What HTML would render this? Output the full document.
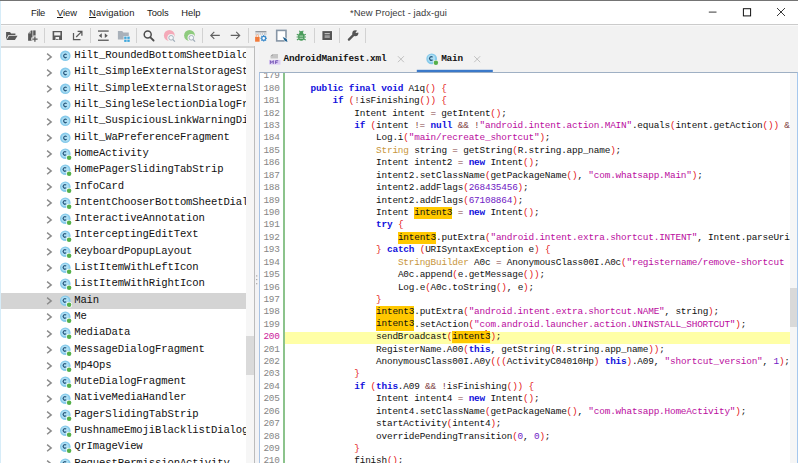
<!DOCTYPE html>
<html><head><meta charset="utf-8"><title>jadx-gui</title>
<style>
html,body{margin:0;padding:0;}
body{width:798px;height:463px;overflow:hidden;background:#fff;position:relative;font-family:"Liberation Sans",sans-serif;}
.abs{position:absolute;}
#titlebar{left:0;top:0;width:798px;height:24px;background:#fff;border-top:1px solid #747474;box-sizing:border-box;}
.menu{position:absolute;top:6.5px;font-size:9.4px;color:#1a1a1a;white-space:nowrap;line-height:12px;}
.menu u{text-decoration:underline;text-underline-offset:1px;}
#title{position:absolute;top:6.5px;left:350px;font-size:9.4px;letter-spacing:0.07px;color:#3a3a3a;white-space:nowrap;line-height:12px;}
#toolbar{left:0;top:24px;width:798px;height:23px;background:#f2f2f2;border-top:1px solid #cbcbcb;box-sizing:border-box;box-shadow:inset 0 1px 0 #f9f9f9;}
.sep{position:absolute;top:28.2px;width:1px;height:14.6px;background:#d2d2d2;}
#tree{left:1px;top:47.5px;width:245.2px;height:416px;background:#fff;overflow:hidden;}
.row{position:absolute;white-space:pre;font-family:"Liberation Mono",monospace;color:#111;}
.row .tx{position:absolute;top:0;}
.row.sel{background:#d4d4d4;}
.chev{position:absolute;}
.ico{position:absolute;}
#tsb{left:246.2px;top:47.5px;width:7.7px;height:416px;background:#f6f6f6;}
#tsbthumb{left:246.2px;top:336px;width:7.7px;height:38.7px;background:#dadada;}
#split{left:253.9px;top:46.3px;width:5.1px;height:417px;background:#f3f3f5;border-left:0.9px solid #bcbcbc;box-sizing:border-box;}
#tabs{left:259px;top:47px;width:539px;height:25px;background:#f2f2f2;}
.tabtx{position:absolute;font-family:"Liberation Mono",monospace;font-weight:bold;color:#111;white-space:nowrap;}
#codewrap{left:259px;top:72px;width:539px;height:391px;background:#fff;border-left:1px solid #a9c3e3;border-top:1px solid #9fb0c4;border-right:1.2px solid #a6c8ee;box-sizing:border-box;overflow:hidden;}
.ln{position:absolute;font-family:"Liberation Mono",monospace;color:#8a8a8a;white-space:pre;}
.cl{position:absolute;font-family:"Liberation Mono",monospace;color:#111;white-space:pre;}
.k{color:#1010dc;font-weight:bold;}
.s{color:#ba0c9e;}
.n{color:#7020c4;}
.p{color:#e42020;}
.t{color:#c8963c;}
.o{color:#804040;}
.h{background:#ffc800;padding:0.3px 0 1.2px 0;}
#curline{left:285px;width:504.7px;background:#ffffa6;}
.caret{display:inline-block;width:0;height:10px;vertical-align:-2px;box-shadow:1.1px 0 0 0.8px #e81010;}
#vsb{left:789.7px;top:73px;width:7px;height:390px;background:#f6f6f6;}
#vsbthumb{left:789.7px;top:288px;width:7px;height:38.6px;background:#d9d9d9;}
#greenline{left:283.2px;top:73px;width:1.7px;height:390px;background:#8cc38c;}
</style></head><body>

<div id="titlebar" class="abs"></div>
<div class="menu" style="left:31px;letter-spacing:-0.3px">File</div>
<div class="menu" style="left:57px;letter-spacing:-0.05px"><u>V</u>iew</div>
<div class="menu" style="left:89px;letter-spacing:0.12px"><u>N</u>avigation</div>
<div class="menu" style="left:147.1px;letter-spacing:-0.08px">Tools</div>
<div class="menu" style="left:181.2px;letter-spacing:0px">Help</div>
<div id="title">*New Project - jadx-gui</div>
<svg class="abs" style="left:699.3px;top:0" width="98" height="24" viewBox="0 0 98 24">
<line x1="9.8" y1="12.1" x2="17.5" y2="12.1" stroke="#222" stroke-width="0.9"/>
<rect x="44.4" y="8.7" width="7.2" height="7.2" fill="none" stroke="#111" stroke-width="1"/>
<path d="M78 8 L86 16 M86 8 L78 16" stroke="#222" stroke-width="0.9" fill="none"/>
</svg>
<div id="toolbar" class="abs"></div>
<div class="sep" style="left:44.2px"></div>
<div class="sep" style="left:90.2px"></div>
<div class="sep" style="left:136.2px"></div>
<div class="sep" style="left:202px"></div>
<div class="sep" style="left:248px"></div>
<div class="sep" style="left:314px"></div>
<div class="sep" style="left:339.2px"></div>
<div class="sep" style="left:365px"></div>
<svg class="abs" style="left:0;top:24px" width="400" height="24" viewBox="0 24 400 24">
<path d="M6.1 32 h3.9 l1.1 1.4 h4.3 v1.6 h-6.9 l-2.4 4.6 z" fill="#595959"/>
<path d="M9.1 35.7 h8.4 l-2.6 4.3 h-8.4 z" fill="#595959"/>
<path d="M28.1 33.6 l3 -3.2 h1.4 v10.4 h-4.4 z" fill="#595959"/>
<path d="M28.1 33.4 h2.9 v-2.9 z" fill="#a9a9a9"/>
<rect x="33.2" y="30.4" width="2.4" height="10.4" fill="#595959"/>
<path d="M33.3 35.6 h3.2 v1.9 h2 v3.1 h-2 v2 h-3.2 v-2 h-2 v-3.1 h2 z" fill="#f2f2f2"/>
<path d="M34.9 36.5 v5.2 M32.3 39.05 h5.3" stroke="#595959" stroke-width="1.25" fill="none"/>
<path d="M52.6 30.9 h9.4 v9.1 h-2.9 v-2.9 h-3.6 v2.9 h-2.9 z M54.2 32.3 v3.3 h6.2 v-3.3 z" fill="#595959" fill-rule="evenodd"/>
<rect x="56" y="39" width="2.6" height="0.8" fill="#595959"/>
<path d="M73.5 33 v6.5 h7" stroke="#595959" stroke-width="1.25" fill="none"/>
<path d="M76.2 37 L81.6 31.6 M77.6 31.45 h4.3 v4.3" stroke="#595959" stroke-width="1.25" fill="none"/>
<rect x="98" y="30.4" width="10.7" height="1.3" fill="#595959"/><rect x="98" y="39.6" width="10.7" height="1.3" fill="#595959"/>
<path d="M98.8 35.65 l3 -2.3 v4.6 z M107.8 35.65 l-3 -2.3 v4.6 z" fill="#595959"/>
<path d="M117.9 31.1 h4.3 l1.2 1.5 h5.4 v7 h-10.9 z" fill="#a9b1ba"/>
<rect x="123.6" y="36" width="6.6" height="6.4" fill="#f2f2f2"/>
<g fill="#3fa7dc"><rect x="124.2" y="36.6" width="2.4" height="2.3"/><rect x="127.3" y="36.6" width="2.4" height="2.3"/><rect x="124.2" y="39.6" width="2.4" height="2.3"/><rect x="127.3" y="39.6" width="2.4" height="2.3"/></g>
<circle cx="147.7" cy="34.5" r="3.5" fill="none" stroke="#4d4d4d" stroke-width="1.5"/><path d="M150.4 37.3 L153.6 40.5" stroke="#4d4d4d" stroke-width="1.8" stroke-linecap="round"/>
<circle cx="169.3" cy="35.4" r="5.4" fill="#f4a9b8"/>
<circle cx="171.10000000000002" cy="37.8" r="3.8" fill="#f2f2f2"/>
<path d="M172.70000000000002 39.4 L175.20000000000002 42" stroke="#f2f2f2" stroke-width="2.6"/>
<circle cx="171.10000000000002" cy="37.8" r="2.3" fill="#f4f7f9" stroke="#9eabb8" stroke-width="0.9"/>
<path d="M172.8 39.5 L174.90000000000003 41.7" stroke="#9eabb8" stroke-width="1.15"/>
<circle cx="189.5" cy="35.4" r="5.4" fill="#8ecb7e"/>
<circle cx="191.3" cy="37.8" r="3.8" fill="#f2f2f2"/>
<path d="M192.9 39.4 L195.4 42" stroke="#f2f2f2" stroke-width="2.6"/>
<circle cx="191.3" cy="37.8" r="2.3" fill="#f4f7f9" stroke="#9eabb8" stroke-width="0.9"/>
<path d="M193.0 39.5 L195.10000000000002 41.7" stroke="#9eabb8" stroke-width="1.15"/>
<path d="M219.8 35.4 H210.9 M214.3 31.9 L210.8 35.4 L214.3 38.9" stroke="#606060" stroke-width="1.15" fill="none"/>
<path d="M230.7 35.4 H239.6 M236.2 31.9 L239.7 35.4 L236.2 38.9" stroke="#606060" stroke-width="1.15" fill="none"/>
<rect x="255.4" y="31.1" width="11" height="1.3" fill="#8a8f96"/>
<path d="M256 32.4 v2.6 M258.1 32.4 v2.6 M260.2 32.4 v2.6 M262.3 32.4 v2.6 M264.4 32.4 v2.6 M265.9 32.4 v2.6" stroke="#c3c7cc" stroke-width="1.1"/>
<rect x="255.1" y="36.9" width="4.5" height="4.8" fill="#f27a3a"/><path d="M256.2 37 v-1.2 a1.15 1.15 0 0 1 2.3 0 v1.2" stroke="#f6a274" stroke-width="0.8" fill="none"/>
<circle cx="263.7" cy="38.3" r="1.95" fill="#fff" stroke="#3a8acb" stroke-width="1.25"/>
<g stroke="#3a8acb" stroke-width="1.1"><path d="M263.7 35 v1 M263.7 40.6 v1 M260.4 38.3 h1 M266 38.3 h1 M261.4 36 l0.7 0.7 M265.3 39.9 l0.7 0.7 M266 36 l-0.7 0.7 M262.1 39.9 l-0.7 0.7"/></g>
<rect x="276.7" y="30.4" width="9.3" height="10.5" fill="#fff" stroke="#8796a6" stroke-width="1.6"/>
<path d="M281.9 36.3 l5.4 2 l0.8 4 l-3.4 -0.6 z" fill="#f2f2f2"/>
<path d="M282.8 37 l3.8 1.7 l0.9 3.2 l-2.8 -1.2 z" fill="#1d5f8f"/>
<ellipse cx="301.3" cy="36.8" rx="3.2" ry="4" fill="#4b9c5c"/>
<path d="M299.3 30.7 l1.3 1.8 M303.3 30.7 l-1.3 1.8 M296.8 34.2 l2 1 M305.8 34.2 l-2 1 M296.6 37 h2 M306 37 h-2 M296.9 40 l2 -1.2 M305.7 40 l-2 -1.2" stroke="#4b9c5c" stroke-width="1.1" fill="none"/>
<circle cx="301.3" cy="33" r="1.9" fill="#4b9c5c"/>
<path d="M299.5 36.1 h3.6 M299.5 38.3 h3.6" stroke="#b4d9bc" stroke-width="1"/>
<rect x="321.9" y="30.6" width="10.6" height="9.9" fill="#f8f8f8"/>
<rect x="322.4" y="31.1" width="9.6" height="8.9" fill="#565656"/>
<rect x="324.6" y="33.1" width="5.2" height="1.1" fill="#c9c9c9"/><rect x="324.6" y="35.2" width="5.2" height="2.8" fill="#9c9c9c"/>
<path d="M348.9 39.6 L354.6 33.9" stroke="#555" stroke-width="2.3" stroke-linecap="round"/>
<circle cx="355.3" cy="33.2" r="3" fill="#555"/>
<path d="M355.6 32.9 L358.2 29.2 L360 31.8 Z" fill="#f2f2f2"/>
<path d="M355.5 33 l1.6 -2.3 l1.1 1.5 z" fill="#f2f2f2"/>
</svg>
<div class="abs" style="left:1px;top:46px;width:253.8px;height:1.5px;background:#d4d4d4"></div>
<div id="tree" class="abs">
<svg class="chev" style="left:44.8px;top:5.00px" width="7" height="8" viewBox="0 0 7 8"><path d="M1.1 0.6 L5.2 3.9 L1.1 7.2" fill="none" stroke="#8a8a8a" stroke-width="1.4"/></svg>
<svg class="ico" style="left:57.9px;top:2.70px" width="14" height="14" viewBox="0 0 14 14"><circle cx="6.3" cy="5.8" r="5.3" fill="#86caeb"/><circle cx="6.5" cy="5.9" r="3.7" fill="#aedff4"/><path d="M7.65 4.65 A1.75 1.75 0 1 0 7.65 7.15" fill="none" stroke="#2a5a7e" stroke-width="1.25"/></svg>
<div class="row" style="left:73.20px;top:-0.37px;font-size:10.6px;line-height:16.30px;letter-spacing:-0.140px">Hilt_RoundedBottomSheetDialogFragment</div>
<svg class="chev" style="left:44.8px;top:21.30px" width="7" height="8" viewBox="0 0 7 8"><path d="M1.1 0.6 L5.2 3.9 L1.1 7.2" fill="none" stroke="#8a8a8a" stroke-width="1.4"/></svg>
<svg class="ico" style="left:57.9px;top:19.00px" width="14" height="14" viewBox="0 0 14 14"><circle cx="6.3" cy="5.8" r="5.3" fill="#86caeb"/><circle cx="6.5" cy="5.9" r="3.7" fill="#aedff4"/><path d="M7.65 4.65 A1.75 1.75 0 1 0 7.65 7.15" fill="none" stroke="#2a5a7e" stroke-width="1.25"/></svg>
<div class="row" style="left:73.20px;top:15.93px;font-size:10.6px;line-height:16.30px;letter-spacing:-0.140px">Hilt_SimpleExternalStorageStateCallback</div>
<svg class="chev" style="left:44.8px;top:37.60px" width="7" height="8" viewBox="0 0 7 8"><path d="M1.1 0.6 L5.2 3.9 L1.1 7.2" fill="none" stroke="#8a8a8a" stroke-width="1.4"/></svg>
<svg class="ico" style="left:57.9px;top:35.30px" width="14" height="14" viewBox="0 0 14 14"><circle cx="6.3" cy="5.8" r="5.3" fill="#86caeb"/><circle cx="6.5" cy="5.9" r="3.7" fill="#aedff4"/><path d="M7.65 4.65 A1.75 1.75 0 1 0 7.65 7.15" fill="none" stroke="#2a5a7e" stroke-width="1.25"/></svg>
<div class="row" style="left:73.20px;top:32.23px;font-size:10.6px;line-height:16.30px;letter-spacing:-0.140px">Hilt_SimpleExternalStorageStateDialog</div>
<svg class="chev" style="left:44.8px;top:53.90px" width="7" height="8" viewBox="0 0 7 8"><path d="M1.1 0.6 L5.2 3.9 L1.1 7.2" fill="none" stroke="#8a8a8a" stroke-width="1.4"/></svg>
<svg class="ico" style="left:57.9px;top:51.60px" width="14" height="14" viewBox="0 0 14 14"><circle cx="6.3" cy="5.8" r="5.3" fill="#86caeb"/><circle cx="6.5" cy="5.9" r="3.7" fill="#aedff4"/><path d="M7.65 4.65 A1.75 1.75 0 1 0 7.65 7.15" fill="none" stroke="#2a5a7e" stroke-width="1.25"/></svg>
<div class="row" style="left:73.20px;top:48.53px;font-size:10.6px;line-height:16.30px;letter-spacing:-0.140px">Hilt_SingleSelectionDialogFragment</div>
<svg class="chev" style="left:44.8px;top:70.20px" width="7" height="8" viewBox="0 0 7 8"><path d="M1.1 0.6 L5.2 3.9 L1.1 7.2" fill="none" stroke="#8a8a8a" stroke-width="1.4"/></svg>
<svg class="ico" style="left:57.9px;top:67.90px" width="14" height="14" viewBox="0 0 14 14"><circle cx="6.3" cy="5.8" r="5.3" fill="#86caeb"/><circle cx="6.5" cy="5.9" r="3.7" fill="#aedff4"/><path d="M7.65 4.65 A1.75 1.75 0 1 0 7.65 7.15" fill="none" stroke="#2a5a7e" stroke-width="1.25"/></svg>
<div class="row" style="left:73.20px;top:64.83px;font-size:10.6px;line-height:16.30px;letter-spacing:-0.140px">Hilt_SuspiciousLinkWarningDialogFragment</div>
<svg class="chev" style="left:44.8px;top:86.50px" width="7" height="8" viewBox="0 0 7 8"><path d="M1.1 0.6 L5.2 3.9 L1.1 7.2" fill="none" stroke="#8a8a8a" stroke-width="1.4"/></svg>
<svg class="ico" style="left:57.9px;top:84.20px" width="14" height="14" viewBox="0 0 14 14"><circle cx="6.3" cy="5.8" r="5.3" fill="#86caeb"/><circle cx="6.5" cy="5.9" r="3.7" fill="#aedff4"/><path d="M7.65 4.65 A1.75 1.75 0 1 0 7.65 7.15" fill="none" stroke="#2a5a7e" stroke-width="1.25"/></svg>
<div class="row" style="left:73.20px;top:81.13px;font-size:10.6px;line-height:16.30px;letter-spacing:-0.140px">Hilt_WaPreferenceFragment</div>
<svg class="chev" style="left:44.8px;top:102.80px" width="7" height="8" viewBox="0 0 7 8"><path d="M1.1 0.6 L5.2 3.9 L1.1 7.2" fill="none" stroke="#8a8a8a" stroke-width="1.4"/></svg>
<svg class="ico" style="left:57.9px;top:100.50px" width="14" height="14" viewBox="0 0 14 14"><circle cx="6.3" cy="5.8" r="5.3" fill="#86caeb"/><circle cx="6.0" cy="5.4" r="3.7" fill="#aedff4"/><path d="M7.15 4.15 A1.75 1.75 0 1 0 7.15 6.65" fill="none" stroke="#2a5a7e" stroke-width="1.25"/><circle cx="10.1" cy="9.7" r="2.9" fill="#fff"/><circle cx="10.1" cy="9.7" r="2.25" fill="#55b04a"/></svg>
<div class="row" style="left:73.20px;top:97.43px;font-size:10.6px;line-height:16.30px;letter-spacing:-0.140px">HomeActivity</div>
<svg class="chev" style="left:44.8px;top:119.10px" width="7" height="8" viewBox="0 0 7 8"><path d="M1.1 0.6 L5.2 3.9 L1.1 7.2" fill="none" stroke="#8a8a8a" stroke-width="1.4"/></svg>
<svg class="ico" style="left:57.9px;top:116.80px" width="14" height="14" viewBox="0 0 14 14"><circle cx="6.3" cy="5.8" r="5.3" fill="#86caeb"/><circle cx="6.0" cy="5.4" r="3.7" fill="#aedff4"/><path d="M7.15 4.15 A1.75 1.75 0 1 0 7.15 6.65" fill="none" stroke="#2a5a7e" stroke-width="1.25"/><circle cx="10.1" cy="9.7" r="2.9" fill="#fff"/><circle cx="10.1" cy="9.7" r="2.25" fill="#55b04a"/></svg>
<div class="row" style="left:73.20px;top:113.73px;font-size:10.6px;line-height:16.30px;letter-spacing:-0.140px">HomePagerSlidingTabStrip</div>
<svg class="chev" style="left:44.8px;top:135.40px" width="7" height="8" viewBox="0 0 7 8"><path d="M1.1 0.6 L5.2 3.9 L1.1 7.2" fill="none" stroke="#8a8a8a" stroke-width="1.4"/></svg>
<svg class="ico" style="left:57.9px;top:133.10px" width="14" height="14" viewBox="0 0 14 14"><circle cx="6.3" cy="5.8" r="5.3" fill="#86caeb"/><circle cx="6.0" cy="5.4" r="3.7" fill="#aedff4"/><path d="M7.15 4.15 A1.75 1.75 0 1 0 7.15 6.65" fill="none" stroke="#2a5a7e" stroke-width="1.25"/><circle cx="10.1" cy="9.7" r="2.9" fill="#fff"/><circle cx="10.1" cy="9.7" r="2.25" fill="#55b04a"/></svg>
<div class="row" style="left:73.20px;top:130.03px;font-size:10.6px;line-height:16.30px;letter-spacing:-0.140px">InfoCard</div>
<svg class="chev" style="left:44.8px;top:151.70px" width="7" height="8" viewBox="0 0 7 8"><path d="M1.1 0.6 L5.2 3.9 L1.1 7.2" fill="none" stroke="#8a8a8a" stroke-width="1.4"/></svg>
<svg class="ico" style="left:57.9px;top:149.40px" width="14" height="14" viewBox="0 0 14 14"><circle cx="6.3" cy="5.8" r="5.3" fill="#86caeb"/><circle cx="6.0" cy="5.4" r="3.7" fill="#aedff4"/><path d="M7.15 4.15 A1.75 1.75 0 1 0 7.15 6.65" fill="none" stroke="#2a5a7e" stroke-width="1.25"/><circle cx="10.1" cy="9.7" r="2.9" fill="#fff"/><circle cx="10.1" cy="9.7" r="2.25" fill="#55b04a"/></svg>
<div class="row" style="left:73.20px;top:146.33px;font-size:10.6px;line-height:16.30px;letter-spacing:-0.140px">IntentChooserBottomSheetDialogFragment</div>
<svg class="chev" style="left:44.8px;top:168.00px" width="7" height="8" viewBox="0 0 7 8"><path d="M1.1 0.6 L5.2 3.9 L1.1 7.2" fill="none" stroke="#8a8a8a" stroke-width="1.4"/></svg>
<svg class="ico" style="left:57.9px;top:165.70px" width="14" height="14" viewBox="0 0 14 14"><circle cx="6.3" cy="5.8" r="5.3" fill="#86caeb"/><circle cx="6.0" cy="5.4" r="3.7" fill="#aedff4"/><path d="M7.15 4.15 A1.75 1.75 0 1 0 7.15 6.65" fill="none" stroke="#2a5a7e" stroke-width="1.25"/><circle cx="10.1" cy="9.7" r="2.9" fill="#fff"/><circle cx="10.1" cy="9.7" r="2.25" fill="#55b04a"/></svg>
<div class="row" style="left:73.20px;top:162.63px;font-size:10.6px;line-height:16.30px;letter-spacing:-0.140px">InteractiveAnnotation</div>
<svg class="chev" style="left:44.8px;top:184.30px" width="7" height="8" viewBox="0 0 7 8"><path d="M1.1 0.6 L5.2 3.9 L1.1 7.2" fill="none" stroke="#8a8a8a" stroke-width="1.4"/></svg>
<svg class="ico" style="left:57.9px;top:182.00px" width="14" height="14" viewBox="0 0 14 14"><circle cx="6.3" cy="5.8" r="5.3" fill="#86caeb"/><circle cx="6.0" cy="5.4" r="3.7" fill="#aedff4"/><path d="M7.15 4.15 A1.75 1.75 0 1 0 7.15 6.65" fill="none" stroke="#2a5a7e" stroke-width="1.25"/><circle cx="10.1" cy="9.7" r="2.9" fill="#fff"/><circle cx="10.1" cy="9.7" r="2.25" fill="#55b04a"/></svg>
<div class="row" style="left:73.20px;top:178.93px;font-size:10.6px;line-height:16.30px;letter-spacing:-0.140px">InterceptingEditText</div>
<svg class="chev" style="left:44.8px;top:200.60px" width="7" height="8" viewBox="0 0 7 8"><path d="M1.1 0.6 L5.2 3.9 L1.1 7.2" fill="none" stroke="#8a8a8a" stroke-width="1.4"/></svg>
<svg class="ico" style="left:57.9px;top:198.30px" width="14" height="14" viewBox="0 0 14 14"><circle cx="6.3" cy="5.8" r="5.3" fill="#86caeb"/><circle cx="6.0" cy="5.4" r="3.7" fill="#aedff4"/><path d="M7.15 4.15 A1.75 1.75 0 1 0 7.15 6.65" fill="none" stroke="#2a5a7e" stroke-width="1.25"/><circle cx="10.1" cy="9.7" r="2.9" fill="#fff"/><circle cx="10.1" cy="9.7" r="2.25" fill="#55b04a"/></svg>
<div class="row" style="left:73.20px;top:195.23px;font-size:10.6px;line-height:16.30px;letter-spacing:-0.140px">KeyboardPopupLayout</div>
<svg class="chev" style="left:44.8px;top:216.90px" width="7" height="8" viewBox="0 0 7 8"><path d="M1.1 0.6 L5.2 3.9 L1.1 7.2" fill="none" stroke="#8a8a8a" stroke-width="1.4"/></svg>
<svg class="ico" style="left:57.9px;top:214.60px" width="14" height="14" viewBox="0 0 14 14"><circle cx="6.3" cy="5.8" r="5.3" fill="#86caeb"/><circle cx="6.0" cy="5.4" r="3.7" fill="#aedff4"/><path d="M7.15 4.15 A1.75 1.75 0 1 0 7.15 6.65" fill="none" stroke="#2a5a7e" stroke-width="1.25"/><circle cx="10.1" cy="9.7" r="2.9" fill="#fff"/><circle cx="10.1" cy="9.7" r="2.25" fill="#55b04a"/></svg>
<div class="row" style="left:73.20px;top:211.53px;font-size:10.6px;line-height:16.30px;letter-spacing:-0.140px">ListItemWithLeftIcon</div>
<svg class="chev" style="left:44.8px;top:233.20px" width="7" height="8" viewBox="0 0 7 8"><path d="M1.1 0.6 L5.2 3.9 L1.1 7.2" fill="none" stroke="#8a8a8a" stroke-width="1.4"/></svg>
<svg class="ico" style="left:57.9px;top:230.90px" width="14" height="14" viewBox="0 0 14 14"><circle cx="6.3" cy="5.8" r="5.3" fill="#86caeb"/><circle cx="6.0" cy="5.4" r="3.7" fill="#aedff4"/><path d="M7.15 4.15 A1.75 1.75 0 1 0 7.15 6.65" fill="none" stroke="#2a5a7e" stroke-width="1.25"/><circle cx="10.1" cy="9.7" r="2.9" fill="#fff"/><circle cx="10.1" cy="9.7" r="2.25" fill="#55b04a"/></svg>
<div class="row" style="left:73.20px;top:227.83px;font-size:10.6px;line-height:16.30px;letter-spacing:-0.140px">ListItemWithRightIcon</div>
<div class="abs" style="left:0;top:245.50px;width:245px;height:15.6px;background:#d4d4d4"></div>
<svg class="chev" style="left:44.8px;top:249.50px" width="7" height="8" viewBox="0 0 7 8"><path d="M1.1 0.6 L5.2 3.9 L1.1 7.2" fill="none" stroke="#8a8a8a" stroke-width="1.4"/></svg>
<svg class="ico" style="left:57.9px;top:247.20px" width="14" height="14" viewBox="0 0 14 14"><circle cx="6.3" cy="5.8" r="5.3" fill="#86caeb"/><circle cx="6.0" cy="5.4" r="3.7" fill="#aedff4"/><path d="M7.15 4.15 A1.75 1.75 0 1 0 7.15 6.65" fill="none" stroke="#2a5a7e" stroke-width="1.25"/><circle cx="10.1" cy="9.7" r="2.9" fill="#fff"/><circle cx="10.1" cy="9.7" r="2.25" fill="#55b04a"/></svg>
<div class="row" style="left:73.20px;top:244.13px;font-size:10.6px;line-height:16.30px;letter-spacing:-0.140px">Main</div>
<svg class="chev" style="left:44.8px;top:265.80px" width="7" height="8" viewBox="0 0 7 8"><path d="M1.1 0.6 L5.2 3.9 L1.1 7.2" fill="none" stroke="#8a8a8a" stroke-width="1.4"/></svg>
<svg class="ico" style="left:57.9px;top:263.50px" width="14" height="14" viewBox="0 0 14 14"><circle cx="6.3" cy="5.8" r="5.3" fill="#86caeb"/><circle cx="6.0" cy="5.4" r="3.7" fill="#aedff4"/><path d="M7.15 4.15 A1.75 1.75 0 1 0 7.15 6.65" fill="none" stroke="#2a5a7e" stroke-width="1.25"/><circle cx="10.1" cy="9.7" r="2.9" fill="#fff"/><circle cx="10.1" cy="9.7" r="2.25" fill="#55b04a"/></svg>
<div class="row" style="left:73.20px;top:260.43px;font-size:10.6px;line-height:16.30px;letter-spacing:-0.140px">Me</div>
<svg class="chev" style="left:44.8px;top:282.10px" width="7" height="8" viewBox="0 0 7 8"><path d="M1.1 0.6 L5.2 3.9 L1.1 7.2" fill="none" stroke="#8a8a8a" stroke-width="1.4"/></svg>
<svg class="ico" style="left:57.9px;top:279.80px" width="14" height="14" viewBox="0 0 14 14"><circle cx="6.3" cy="5.8" r="5.3" fill="#86caeb"/><circle cx="6.0" cy="5.4" r="3.7" fill="#aedff4"/><path d="M7.15 4.15 A1.75 1.75 0 1 0 7.15 6.65" fill="none" stroke="#2a5a7e" stroke-width="1.25"/><circle cx="10.1" cy="9.7" r="2.9" fill="#fff"/><circle cx="10.1" cy="9.7" r="2.25" fill="#55b04a"/></svg>
<div class="row" style="left:73.20px;top:276.73px;font-size:10.6px;line-height:16.30px;letter-spacing:-0.140px">MediaData</div>
<svg class="chev" style="left:44.8px;top:298.40px" width="7" height="8" viewBox="0 0 7 8"><path d="M1.1 0.6 L5.2 3.9 L1.1 7.2" fill="none" stroke="#8a8a8a" stroke-width="1.4"/></svg>
<svg class="ico" style="left:57.9px;top:296.10px" width="14" height="14" viewBox="0 0 14 14"><circle cx="6.3" cy="5.8" r="5.3" fill="#86caeb"/><circle cx="6.0" cy="5.4" r="3.7" fill="#aedff4"/><path d="M7.15 4.15 A1.75 1.75 0 1 0 7.15 6.65" fill="none" stroke="#2a5a7e" stroke-width="1.25"/><circle cx="10.1" cy="9.7" r="2.9" fill="#fff"/><circle cx="10.1" cy="9.7" r="2.25" fill="#55b04a"/></svg>
<div class="row" style="left:73.20px;top:293.03px;font-size:10.6px;line-height:16.30px;letter-spacing:-0.140px">MessageDialogFragment</div>
<svg class="chev" style="left:44.8px;top:314.70px" width="7" height="8" viewBox="0 0 7 8"><path d="M1.1 0.6 L5.2 3.9 L1.1 7.2" fill="none" stroke="#8a8a8a" stroke-width="1.4"/></svg>
<svg class="ico" style="left:57.9px;top:312.40px" width="14" height="14" viewBox="0 0 14 14"><circle cx="6.3" cy="5.8" r="5.3" fill="#86caeb"/><circle cx="6.0" cy="5.4" r="3.7" fill="#aedff4"/><path d="M7.15 4.15 A1.75 1.75 0 1 0 7.15 6.65" fill="none" stroke="#2a5a7e" stroke-width="1.25"/><circle cx="10.1" cy="9.7" r="2.9" fill="#fff"/><circle cx="10.1" cy="9.7" r="2.25" fill="#55b04a"/></svg>
<div class="row" style="left:73.20px;top:309.33px;font-size:10.6px;line-height:16.30px;letter-spacing:-0.140px">Mp4Ops</div>
<svg class="chev" style="left:44.8px;top:331.00px" width="7" height="8" viewBox="0 0 7 8"><path d="M1.1 0.6 L5.2 3.9 L1.1 7.2" fill="none" stroke="#8a8a8a" stroke-width="1.4"/></svg>
<svg class="ico" style="left:57.9px;top:328.70px" width="14" height="14" viewBox="0 0 14 14"><circle cx="6.3" cy="5.8" r="5.3" fill="#86caeb"/><circle cx="6.0" cy="5.4" r="3.7" fill="#aedff4"/><path d="M7.15 4.15 A1.75 1.75 0 1 0 7.15 6.65" fill="none" stroke="#2a5a7e" stroke-width="1.25"/><circle cx="10.1" cy="9.7" r="2.9" fill="#fff"/><circle cx="10.1" cy="9.7" r="2.25" fill="#55b04a"/></svg>
<div class="row" style="left:73.20px;top:325.63px;font-size:10.6px;line-height:16.30px;letter-spacing:-0.140px">MuteDialogFragment</div>
<svg class="chev" style="left:44.8px;top:347.30px" width="7" height="8" viewBox="0 0 7 8"><path d="M1.1 0.6 L5.2 3.9 L1.1 7.2" fill="none" stroke="#8a8a8a" stroke-width="1.4"/></svg>
<svg class="ico" style="left:57.9px;top:345.00px" width="14" height="14" viewBox="0 0 14 14"><circle cx="6.3" cy="5.8" r="5.3" fill="#86caeb"/><circle cx="6.0" cy="5.4" r="3.7" fill="#aedff4"/><path d="M7.15 4.15 A1.75 1.75 0 1 0 7.15 6.65" fill="none" stroke="#2a5a7e" stroke-width="1.25"/><circle cx="10.1" cy="9.7" r="2.9" fill="#fff"/><circle cx="10.1" cy="9.7" r="2.25" fill="#55b04a"/></svg>
<div class="row" style="left:73.20px;top:341.93px;font-size:10.6px;line-height:16.30px;letter-spacing:-0.140px">NativeMediaHandler</div>
<svg class="chev" style="left:44.8px;top:363.60px" width="7" height="8" viewBox="0 0 7 8"><path d="M1.1 0.6 L5.2 3.9 L1.1 7.2" fill="none" stroke="#8a8a8a" stroke-width="1.4"/></svg>
<svg class="ico" style="left:57.9px;top:361.30px" width="14" height="14" viewBox="0 0 14 14"><circle cx="6.3" cy="5.8" r="5.3" fill="#86caeb"/><circle cx="6.0" cy="5.4" r="3.7" fill="#aedff4"/><path d="M7.15 4.15 A1.75 1.75 0 1 0 7.15 6.65" fill="none" stroke="#2a5a7e" stroke-width="1.25"/><circle cx="10.1" cy="9.7" r="2.9" fill="#fff"/><circle cx="10.1" cy="9.7" r="2.25" fill="#55b04a"/></svg>
<div class="row" style="left:73.20px;top:358.23px;font-size:10.6px;line-height:16.30px;letter-spacing:-0.140px">PagerSlidingTabStrip</div>
<svg class="chev" style="left:44.8px;top:379.90px" width="7" height="8" viewBox="0 0 7 8"><path d="M1.1 0.6 L5.2 3.9 L1.1 7.2" fill="none" stroke="#8a8a8a" stroke-width="1.4"/></svg>
<svg class="ico" style="left:57.9px;top:377.60px" width="14" height="14" viewBox="0 0 14 14"><circle cx="6.3" cy="5.8" r="5.3" fill="#86caeb"/><circle cx="6.0" cy="5.4" r="3.7" fill="#aedff4"/><path d="M7.15 4.15 A1.75 1.75 0 1 0 7.15 6.65" fill="none" stroke="#2a5a7e" stroke-width="1.25"/><circle cx="10.1" cy="9.7" r="2.9" fill="#fff"/><circle cx="10.1" cy="9.7" r="2.25" fill="#55b04a"/></svg>
<div class="row" style="left:73.20px;top:374.53px;font-size:10.6px;line-height:16.30px;letter-spacing:-0.140px">PushnameEmojiBlacklistDialogFragment</div>
<svg class="chev" style="left:44.8px;top:396.20px" width="7" height="8" viewBox="0 0 7 8"><path d="M1.1 0.6 L5.2 3.9 L1.1 7.2" fill="none" stroke="#8a8a8a" stroke-width="1.4"/></svg>
<svg class="ico" style="left:57.9px;top:393.90px" width="14" height="14" viewBox="0 0 14 14"><circle cx="6.3" cy="5.8" r="5.3" fill="#86caeb"/><circle cx="6.0" cy="5.4" r="3.7" fill="#aedff4"/><path d="M7.15 4.15 A1.75 1.75 0 1 0 7.15 6.65" fill="none" stroke="#2a5a7e" stroke-width="1.25"/><circle cx="10.1" cy="9.7" r="2.9" fill="#fff"/><circle cx="10.1" cy="9.7" r="2.25" fill="#55b04a"/></svg>
<div class="row" style="left:73.20px;top:390.83px;font-size:10.6px;line-height:16.30px;letter-spacing:-0.140px">QrImageView</div>
<svg class="chev" style="left:44.8px;top:412.50px" width="7" height="8" viewBox="0 0 7 8"><path d="M1.1 0.6 L5.2 3.9 L1.1 7.2" fill="none" stroke="#8a8a8a" stroke-width="1.4"/></svg>
<svg class="ico" style="left:57.9px;top:410.20px" width="14" height="14" viewBox="0 0 14 14"><circle cx="6.3" cy="5.8" r="5.3" fill="#86caeb"/><circle cx="6.0" cy="5.4" r="3.7" fill="#aedff4"/><path d="M7.15 4.15 A1.75 1.75 0 1 0 7.15 6.65" fill="none" stroke="#2a5a7e" stroke-width="1.25"/><circle cx="10.1" cy="9.7" r="2.9" fill="#fff"/><circle cx="10.1" cy="9.7" r="2.25" fill="#55b04a"/></svg>
<div class="row" style="left:73.20px;top:407.13px;font-size:10.6px;line-height:16.30px;letter-spacing:-0.140px">RequestPermissionActivity</div>
</div>
<div id="tsb" class="abs"></div><div id="tsbthumb" class="abs"></div><div id="split" class="abs"></div>
<svg class="abs" style="left:255px;top:274px" width="4" height="12" viewBox="255 274 4 12"><g fill="#a2a2a2"><rect x="256.1" y="275.3" width="1.2" height="1.2"/><rect x="256.1" y="279" width="1.2" height="1.2"/><rect x="256.1" y="283.1" width="1.2" height="1.2"/></g></svg>
<div id="tabs" class="abs"></div>
<svg class="abs" style="left:259px;top:47px" width="539" height="26" viewBox="259 47 539 26">
<path d="M270.6 56.2 l2.2 -2.2 h5.2 v4.6 h-7.4 z" fill="#c4c4c4"/><path d="M270.6 56 h2 v-2 z" fill="#9c9c9c"/>
<rect x="269" y="59.9" width="11.5" height="4.7" fill="#dccdf3"/>
<path d="M270.4 63.9 v-3.2 l1.45 2 l1.45 -2 v3.2 M275.6 63.9 v-3.2 h2.6 M275.6 62.3 h2" stroke="#6d4cb0" stroke-width="0.85" fill="none"/>
<path d="M397.9 56.2 l6 6 M403.9 56.2 l-6 6" stroke="#b4b4b4" stroke-width="0.8" fill="none"/>
<path d="M474.2 56.2 l6 6 M480.2 56.2 l-6 6" stroke="#b4b4b4" stroke-width="0.8" fill="none"/>
<circle cx="431.7" cy="58.9" r="5.4" fill="#86caeb"/><circle cx="431.4" cy="58.5" r="3.7" fill="#aedff4"/><path d="M432.55 57.25 a1.75 1.75 0 1 0 0 2.5" fill="none" stroke="#2a5a7e" stroke-width="1.25"/>
<circle cx="435.9" cy="62.8" r="2.9" fill="#f2f2f2"/><circle cx="435.9" cy="62.8" r="2.2" fill="#55b04a"/>
<rect x="416.8" y="69.8" width="76" height="2.6" fill="#3b79c9"/>
</svg>
<div class="tabtx" style="left:283.6px;font-size:9.4px;line-height:12px;letter-spacing:-0.220px;top:53.20px">AndroidManifest.xml</div>
<div class="tabtx" style="left:441.2px;font-size:9.4px;line-height:12px;letter-spacing:-0.220px;top:53.20px">Main</div>
<div id="codewrap" class="abs"></div>
<div id="greenline" class="abs"></div>
<div id="curline" class="abs" style="top:332.10px;height:12.3px"></div>
<div id="code" class="abs" style="left:260px;top:73px;width:529.7px;height:390px;overflow:hidden">
<div class="ln" style="left:3.40px;top:-2.63px;font-size:9.4px;line-height:12.42px;letter-spacing:-0.184px;color:#858585">179</div>
<div class="ln" style="left:3.40px;top:9.79px;font-size:9.4px;line-height:12.42px;letter-spacing:-0.184px;color:#858585">180</div>
<div class="cl" style="left:50.62px;top:9.79px;font-size:9.4px;line-height:12.42px;letter-spacing:-0.184px"><span class="k">public final void</span> A1q<span class="p">()</span> <span class="p">{</span></div>
<div class="ln" style="left:3.40px;top:22.21px;font-size:9.4px;line-height:12.42px;letter-spacing:-0.184px;color:#858585">181</div>
<div class="cl" style="left:72.45px;top:22.21px;font-size:9.4px;line-height:12.42px;letter-spacing:-0.184px"><span class="k">if</span> <span class="p">(</span><span class="o">!</span>isFinishing<span class="p">())</span> <span class="p">{</span></div>
<div class="ln" style="left:3.40px;top:34.63px;font-size:9.4px;line-height:12.42px;letter-spacing:-0.184px;color:#858585">182</div>
<div class="cl" style="left:94.27px;top:34.63px;font-size:9.4px;line-height:12.42px;letter-spacing:-0.184px">Intent intent <span class="o">=</span> getIntent<span class="p">()</span>;</div>
<div class="ln" style="left:3.40px;top:47.05px;font-size:9.4px;line-height:12.42px;letter-spacing:-0.184px;color:#858585">183</div>
<div class="cl" style="left:94.27px;top:47.05px;font-size:9.4px;line-height:12.42px;letter-spacing:-0.184px"><span class="k">if</span> <span class="p">(</span>intent <span class="o">!=</span> <span class="k">null</span> <span class="o">&amp;&amp;</span> <span class="o">!</span><span class="s">&quot;android.intent.action.MAIN&quot;</span>.equals<span class="p">(</span>intent.getAction<span class="p">())</span> <span class="o">&amp;</span></div>
<div class="ln" style="left:3.40px;top:59.47px;font-size:9.4px;line-height:12.42px;letter-spacing:-0.184px;color:#858585">184</div>
<div class="cl" style="left:116.10px;top:59.47px;font-size:9.4px;line-height:12.42px;letter-spacing:-0.184px">Log.i<span class="p">(</span><span class="s">&quot;main/recreate_shortcut&quot;</span><span class="p">)</span>;</div>
<div class="ln" style="left:3.40px;top:71.89px;font-size:9.4px;line-height:12.42px;letter-spacing:-0.184px;color:#858585">185</div>
<div class="cl" style="left:116.10px;top:71.89px;font-size:9.4px;line-height:12.42px;letter-spacing:-0.184px"><span class="t">String</span> string <span class="o">=</span> getString<span class="p">(</span>R.string.app_name<span class="p">)</span>;</div>
<div class="ln" style="left:3.40px;top:84.31px;font-size:9.4px;line-height:12.42px;letter-spacing:-0.184px;color:#858585">186</div>
<div class="cl" style="left:116.10px;top:84.31px;font-size:9.4px;line-height:12.42px;letter-spacing:-0.184px">Intent intent2 <span class="o">=</span> <span class="k">new</span> Intent<span class="p">()</span>;</div>
<div class="ln" style="left:3.40px;top:96.73px;font-size:9.4px;line-height:12.42px;letter-spacing:-0.184px;color:#858585">187</div>
<div class="cl" style="left:116.10px;top:96.73px;font-size:9.4px;line-height:12.42px;letter-spacing:-0.184px">intent2.setClassName<span class="p">(</span>getPackageName<span class="p">()</span>, <span class="s">&quot;com.whatsapp.Main&quot;</span><span class="p">)</span>;</div>
<div class="ln" style="left:3.40px;top:109.15px;font-size:9.4px;line-height:12.42px;letter-spacing:-0.184px;color:#858585">188</div>
<div class="cl" style="left:116.10px;top:109.15px;font-size:9.4px;line-height:12.42px;letter-spacing:-0.184px">intent2.addFlags<span class="p">(</span><span class="n">268435456</span><span class="p">)</span>;</div>
<div class="ln" style="left:3.40px;top:121.57px;font-size:9.4px;line-height:12.42px;letter-spacing:-0.184px;color:#858585">189</div>
<div class="cl" style="left:116.10px;top:121.57px;font-size:9.4px;line-height:12.42px;letter-spacing:-0.184px">intent2.addFlags<span class="p">(</span><span class="n">67108864</span><span class="p">)</span>;</div>
<div class="ln" style="left:3.40px;top:133.99px;font-size:9.4px;line-height:12.42px;letter-spacing:-0.184px;color:#858585">190</div>
<div class="cl" style="left:116.10px;top:133.99px;font-size:9.4px;line-height:12.42px;letter-spacing:-0.184px">Intent <span class="h">intent3</span> <span class="o">=</span> <span class="k">new</span> Intent<span class="p">()</span>;</div>
<div class="ln" style="left:3.40px;top:146.41px;font-size:9.4px;line-height:12.42px;letter-spacing:-0.184px;color:#858585">191</div>
<div class="cl" style="left:116.10px;top:146.41px;font-size:9.4px;line-height:12.42px;letter-spacing:-0.184px"><span class="k">try</span> <span class="p">{</span></div>
<div class="ln" style="left:3.40px;top:158.83px;font-size:9.4px;line-height:12.42px;letter-spacing:-0.184px;color:#858585">192</div>
<div class="cl" style="left:137.92px;top:158.83px;font-size:9.4px;line-height:12.42px;letter-spacing:-0.184px"><span class="h">intent3</span>.putExtra<span class="p">(</span><span class="s">&quot;android.intent.extra.shortcut.INTENT&quot;</span>, Intent.parseUri</div>
<div class="ln" style="left:3.40px;top:171.25px;font-size:9.4px;line-height:12.42px;letter-spacing:-0.184px;color:#858585">193</div>
<div class="cl" style="left:116.10px;top:171.25px;font-size:9.4px;line-height:12.42px;letter-spacing:-0.184px"><span class="p">}</span> <span class="k">catch</span> <span class="p">(</span>URISyntaxException e<span class="p">)</span> <span class="p">{</span></div>
<div class="ln" style="left:3.40px;top:183.67px;font-size:9.4px;line-height:12.42px;letter-spacing:-0.184px;color:#858585">194</div>
<div class="cl" style="left:137.92px;top:183.67px;font-size:9.4px;line-height:12.42px;letter-spacing:-0.184px"><span class="t">StringBuilder</span> A0c <span class="o">=</span> AnonymousClass00I.A0c<span class="p">(</span><span class="s">&quot;registername/remove-shortcut</span></div>
<div class="ln" style="left:3.40px;top:196.09px;font-size:9.4px;line-height:12.42px;letter-spacing:-0.184px;color:#858585">195</div>
<div class="cl" style="left:137.92px;top:196.09px;font-size:9.4px;line-height:12.42px;letter-spacing:-0.184px">A0c.append<span class="p">(</span>e.getMessage<span class="p">())</span>;</div>
<div class="ln" style="left:3.40px;top:208.51px;font-size:9.4px;line-height:12.42px;letter-spacing:-0.184px;color:#858585">196</div>
<div class="cl" style="left:137.92px;top:208.51px;font-size:9.4px;line-height:12.42px;letter-spacing:-0.184px">Log.e<span class="p">(</span>A0c.toString<span class="p">()</span>, e<span class="p">)</span>;</div>
<div class="ln" style="left:3.40px;top:220.93px;font-size:9.4px;line-height:12.42px;letter-spacing:-0.184px;color:#858585">197</div>
<div class="cl" style="left:116.10px;top:220.93px;font-size:9.4px;line-height:12.42px;letter-spacing:-0.184px"><span class="p">}</span></div>
<div class="ln" style="left:3.40px;top:233.35px;font-size:9.4px;line-height:12.42px;letter-spacing:-0.184px;color:#858585">198</div>
<div class="cl" style="left:116.10px;top:233.35px;font-size:9.4px;line-height:12.42px;letter-spacing:-0.184px"><span class="h">intent3</span>.putExtra<span class="p">(</span><span class="s">&quot;android.intent.extra.shortcut.NAME&quot;</span>, string<span class="p">)</span>;</div>
<div class="ln" style="left:3.40px;top:245.77px;font-size:9.4px;line-height:12.42px;letter-spacing:-0.184px;color:#858585">199</div>
<div class="cl" style="left:116.10px;top:245.77px;font-size:9.4px;line-height:12.42px;letter-spacing:-0.184px"><span class="h">intent3</span>.setAction<span class="p">(</span><span class="s">&quot;com.android.launcher.action.UNINSTALL_SHORTCUT&quot;</span><span class="p">)</span>;</div>
<div class="ln" style="left:3.40px;top:258.19px;font-size:9.4px;line-height:12.42px;letter-spacing:-0.184px;color:#cc209a">200</div>
<div class="cl" style="left:116.10px;top:258.19px;font-size:9.4px;line-height:12.42px;letter-spacing:-0.184px">sendBroadcast<span class="p">(</span><span class="h">intent</span><span class="caret"></span><span class="h">3</span><span class="p">)</span>;</div>
<div class="ln" style="left:3.40px;top:270.61px;font-size:9.4px;line-height:12.42px;letter-spacing:-0.184px;color:#858585">201</div>
<div class="cl" style="left:116.10px;top:270.61px;font-size:9.4px;line-height:12.42px;letter-spacing:-0.184px">RegisterName.A00<span class="p">(</span><span class="k">this</span>, getString<span class="p">(</span>R.string.app_name<span class="p">))</span>;</div>
<div class="ln" style="left:3.40px;top:283.03px;font-size:9.4px;line-height:12.42px;letter-spacing:-0.184px;color:#858585">202</div>
<div class="cl" style="left:116.10px;top:283.03px;font-size:9.4px;line-height:12.42px;letter-spacing:-0.184px">AnonymousClass00I.A0y<span class="p">(((</span>ActivityC04010Hp<span class="p">)</span> <span class="k">this</span><span class="p">)</span>.A09, <span class="s">&quot;shortcut_version&quot;</span>, <span class="n">1</span><span class="p">)</span>;</div>
<div class="ln" style="left:3.40px;top:295.45px;font-size:9.4px;line-height:12.42px;letter-spacing:-0.184px;color:#858585">203</div>
<div class="cl" style="left:94.27px;top:295.45px;font-size:9.4px;line-height:12.42px;letter-spacing:-0.184px"><span class="p">}</span></div>
<div class="ln" style="left:3.40px;top:307.87px;font-size:9.4px;line-height:12.42px;letter-spacing:-0.184px;color:#858585">204</div>
<div class="cl" style="left:94.27px;top:307.87px;font-size:9.4px;line-height:12.42px;letter-spacing:-0.184px"><span class="k">if</span> <span class="p">(</span><span class="k">this</span>.A09 <span class="o">&amp;&amp;</span> <span class="o">!</span>isFinishing<span class="p">())</span> <span class="p">{</span></div>
<div class="ln" style="left:3.40px;top:320.29px;font-size:9.4px;line-height:12.42px;letter-spacing:-0.184px;color:#858585">205</div>
<div class="cl" style="left:116.10px;top:320.29px;font-size:9.4px;line-height:12.42px;letter-spacing:-0.184px">Intent intent4 <span class="o">=</span> <span class="k">new</span> Intent<span class="p">()</span>;</div>
<div class="ln" style="left:3.40px;top:332.71px;font-size:9.4px;line-height:12.42px;letter-spacing:-0.184px;color:#858585">206</div>
<div class="cl" style="left:116.10px;top:332.71px;font-size:9.4px;line-height:12.42px;letter-spacing:-0.184px">intent4.setClassName<span class="p">(</span>getPackageName<span class="p">()</span>, <span class="s">&quot;com.whatsapp.HomeActivity&quot;</span><span class="p">)</span>;</div>
<div class="ln" style="left:3.40px;top:345.13px;font-size:9.4px;line-height:12.42px;letter-spacing:-0.184px;color:#858585">207</div>
<div class="cl" style="left:116.10px;top:345.13px;font-size:9.4px;line-height:12.42px;letter-spacing:-0.184px">startActivity<span class="p">(</span>intent4<span class="p">)</span>;</div>
<div class="ln" style="left:3.40px;top:357.55px;font-size:9.4px;line-height:12.42px;letter-spacing:-0.184px;color:#858585">208</div>
<div class="cl" style="left:116.10px;top:357.55px;font-size:9.4px;line-height:12.42px;letter-spacing:-0.184px">overridePendingTransition<span class="p">(</span><span class="n">0</span>, <span class="n">0</span><span class="p">)</span>;</div>
<div class="ln" style="left:3.40px;top:369.97px;font-size:9.4px;line-height:12.42px;letter-spacing:-0.184px;color:#858585">209</div>
<div class="cl" style="left:94.27px;top:369.97px;font-size:9.4px;line-height:12.42px;letter-spacing:-0.184px"><span class="p">}</span></div>
<div class="ln" style="left:3.40px;top:382.39px;font-size:9.4px;line-height:12.42px;letter-spacing:-0.184px;color:#858585">210</div>
<div class="cl" style="left:94.27px;top:382.39px;font-size:9.4px;line-height:12.42px;letter-spacing:-0.184px">finish<span class="p">()</span>;</div>
</div>
<div id="vsb" class="abs"></div><div id="vsbthumb" class="abs"></div>
<div class="abs" style="left:0;top:1px;width:1px;height:462px;background:#d6ecf8"></div>
</body></html>
